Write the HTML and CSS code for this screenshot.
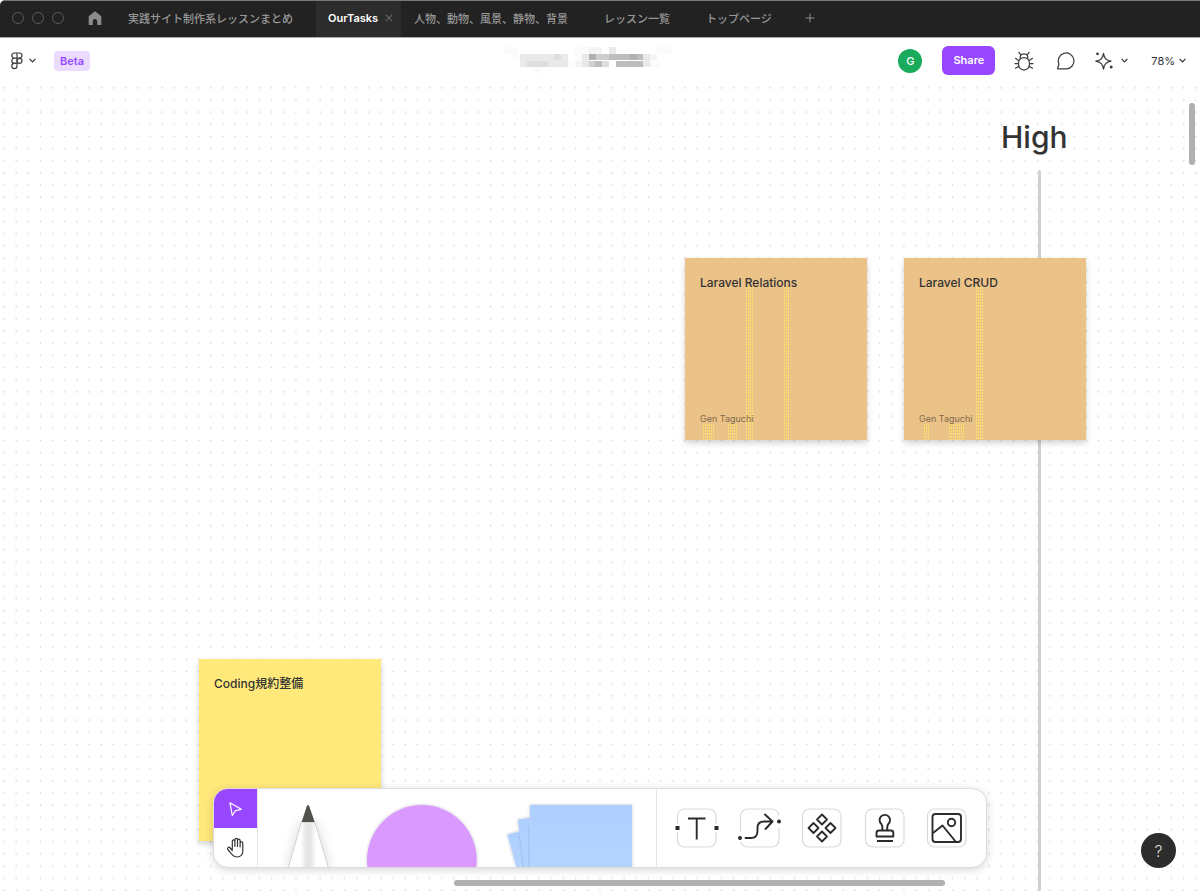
FILE: index.html
```
<!DOCTYPE html>
<html lang="ja">
<head>
<meta charset="utf-8">
<meta name="viewport" content="width=device-width, initial-scale=1">
<title>OurTasks</title>
<link rel="stylesheet" href="styles.css">
</head>
<body>
<div class="app">
  <nav class="tabs" aria-label="Files">
    <div class="lights"><span class="light"></span><span class="light"></span><span class="light"></span></div>
    <button class="home" aria-label="Home"><svg width="14" height="15" viewBox="0 0 14 15"><path d="M7 0.3 13.3 5.2V14H9.2V10.2A2.2 2.2 0 0 0 4.8 10.2V14H0.7V5.2Z" fill="#8c8c8c"/></svg></button>
    <a class="tab" href="#">実践サイト制作系レッスンまとめ</a>
    <div class="tab-active"><a class="tab-name" href="#" aria-current="page">OurTasks</a><button class="close" aria-label="Close tab"><svg width="8" height="8" viewBox="0 0 8 8"><path d="M.8.8 7.2 7.2M7.2.8.8 7.2" stroke="#666" stroke-width="1.200" fill="none"/></svg></button></div>
    <a class="tab" href="#">人物、動物、風景、静物、背景</a>
    <a class="tab" href="#">レッスン一覧</a>
    <a class="tab" href="#">トップページ</a>
    <button class="add" aria-label="New tab"><svg width="10" height="10" viewBox="0 0 10 10"><path d="M5 .5v9M.5 5h9" stroke="#8c8c8c" fill="none"/></svg></button>
  </nav>

  <header class="header">
    <div class="side">
      <button class="menu" aria-label="Main menu">
        <svg width="12" height="18" viewBox="0 0 12 18" fill="none" stroke="#3d3d3d" stroke-width="1.2"><path d="M6 1H3.4a2.6 2.6 0 0 0 0 5.2H6ZM6 1h2.4a2.6 2.6 0 0 1 0 5.2H6ZM6 6.2H3.4a2.6 2.6 0 0 0 0 5.2H6Z"/><circle cx="8.5" cy="8.8" r="2.5"/><path d="M6 11.4H3.4A2.6 2.6 0 1 0 6 14Z"/></svg>
        <svg width="7" height="5" viewBox="0 0 7 5" fill="none" stroke="#333" stroke-width="1.200"><path d="M.6.9 3.5 3.8 6.4.9"/></svg>
      </button>
      <span class="beta">Beta</span>
    </div>
    <svg class="mosaic" width="180" height="44" viewBox="0 0 180 44" shape-rendering="crispEdges" aria-hidden="true">
      <path fill="#fafcfb" d="M5 8h13.500v6.700H5zM76 8h27v6.700H76zM157 8h16v6.700h-16zM12 14.700h9v6.700h-9zM34 28.300h7v6.700h-7zM68 21.600h7v6.700h-7zM76 14.700h7v6.700h-7zM151 21.600h10v6.700h-10z"/>
      <path fill="#f4f4f4" d="M76 21.600h7v6.700h-7zM90 8h13v6.700H90zM151 14.700h7v6.700h-7z"/>
      <path fill="#e9e9e9" d="M20.700 14.700H69v13.600H20.700zM110 8h7v6.700h-7zM82.500 14.700h7v13.600h-7zM144 14.700h7v13.600h-7z"/>
      <path fill="#dedede" d="M28 21.600h20.500v6.700H28zM55 14.700h7v6.700h-7zM103 21.600h7v6.700h-7z"/>
      <path fill="#cecece" d="M96 14.700h14v6.700H96zM89.500 21.600h7v6.700h-7z"/>
      <path fill="#bdbdbd" d="M89.500 14.700h7v6.700h-7zM96 21.600h7v6.700h-7zM110 14.700h34v6.700h-34zM117 21.600h27v6.700h-27z"/>
      <path fill="#b0b0b0" d="M89.500 14.700h7v6.700h-7zM130.500 14.700h7v6.700h-7z"/>
    </svg>
    <div class="side side-right">
      <span class="avatar">G</span>
      <button class="share">Share</button>
      <button class="tool" aria-label="Report a bug"><svg width="20" height="20" viewBox="0 0 20 20" fill="none" stroke="#3d3d3d" stroke-width="1.250" stroke-linecap="round"><rect x="4.500" y="6.500" width="11" height="12.500" rx="5.500"/><path d="M6.300 7.500V6a3.700 3.200 0 0 1 7.400 0v1.500M6.500 3.300 5 1.300M13.500 3.300 15 1.300M4.500 9.300 1.500 7.300M15.500 9.300l3-2M4.500 12.500H1M15.500 12.500H19M4.800 15.200l-3.300 2M15.200 15.200l3.300 2"/></svg></button>
      <button class="tool" aria-label="Comments"><svg width="20" height="20" viewBox="0 0 20 20" fill="none" stroke="#3d3d3d" stroke-width="1.250" stroke-linejoin="round"><path d="M1.500 17.800 2.900 13.200A7.900 7.900 0 1 1 10.200 17.800Z"/></svg></button>
      <button class="tool sparkle" aria-label="Widgets"><svg width="20" height="20" viewBox="0 0 20 20" fill="none" stroke="#3d3d3d" stroke-width="1.250" stroke-linejoin="round"><path d="M9.500 2.300C10.300 7.500 12 9.200 17 10.200 12 11.200 10.300 13 9.500 18.100 8.700 13 7 11.200 1.800 10.200 7 9.200 8.700 7.500 9.500 2.300Z"/><circle cx="3.500" cy="2.800" r="1.400" fill="#3d3d3d" stroke="none"/><circle cx="17.200" cy="16" r="1.500" fill="#3d3d3d" stroke="none"/></svg>
        <svg width="7" height="5" viewBox="0 0 7 5" fill="none" stroke="#333" stroke-width="1.200"><path d="M.6.9 3.500 3.800 6.400.9"/></svg></button>
      <button class="zoom">78%<svg width="7" height="5" viewBox="0 0 7 5" fill="none" stroke="#333" stroke-width="1.200"><path d="M.6.9 3.500 3.800 6.400.9"/></svg></button>
    </div>
  </header>

  <main class="canvas">
    <svg class="grid" width="100%" height="100%" aria-hidden="true"><defs><pattern id="dots" width="16" height="16" patternUnits="userSpaceOnUse" patternTransform="translate(-2 -3.300) scale(.76)"><rect x="6.900" y="6.900" width="2.200" height="2.200" rx=".6" fill="#dadada"/></pattern></defs><rect width="100%" height="100%" fill="url(#dots)"/></svg>
    <div class="axis"></div>
    <h1 class="axis-label">High</h1>

    <article class="note orange relations">
      <i class="grain relations-a"></i><i class="grain relations-b"></i><i class="grain relations-c"></i><i class="grain relations-d"></i>
      <h2 class="note-title">Laravel Relations</h2><p class="author">Gen Taguchi</p>
    </article>
    <article class="note orange crud">
      <i class="grain crud-a"></i><i class="grain crud-b"></i><i class="grain crud-c"></i>
      <h2 class="note-title">Laravel CRUD</h2><p class="author">Gen Taguchi</p>
    </article>
    <article class="note yellow coding"><h2 class="note-title">Coding規約整備</h2></article>

    <div class="vbar"></div>
    <div class="hbar"></div>

    <div class="toolbar" role="toolbar" aria-label="Tools">
      <div class="modes">
        <button class="mode mode-on" aria-label="Select"><svg width="15" height="16" viewBox="0 0 15 16" fill="none" stroke="#fff" stroke-width="1.200" stroke-linejoin="round"><path d="M2 1.800 13.200 8.300 7.500 9.700 4.300 14.500Z"/></svg></button>
        <button class="mode" aria-label="Hand"><svg width="20" height="22" viewBox="0 0 20 22" fill="none" stroke="#333" stroke-width="1.200" stroke-linecap="round" stroke-linejoin="round"><path d="M6.300 12.300V4.200a1.300 1.300 0 0 1 2.600 0V9.500M8.900 9.500V2.600a1.300 1.300 0 0 1 2.600 0V9.500M11.500 9.500V3.500a1.300 1.300 0 0 1 2.600 0V10M14.100 10V6.300a1.350 1.350 0 0 1 2.700 0V14c0 3.700-2.400 6-5.700 6-3 0-4.500-1.300-6-3.700L1.800 12.500C.8 10.700 2.900 9.400 4.200 11l2.100 2.500"/></svg></button>
      </div>
      <div class="shapes">
        <svg class="art" viewBox="0 0 399 78" role="img" aria-label="Marker, shapes and sticky notes">
          <defs>
            <linearGradient id="barrel"><stop offset="0" stop-color="#fff"/><stop offset=".3" stop-color="#fff"/><stop offset=".45" stop-color="#e6e6e6"/><stop offset=".55" stop-color="#e6e6e6"/><stop offset=".7" stop-color="#fff"/></linearGradient>
            <linearGradient id="paper" x2="0" y2="1"><stop offset="0" stop-color="#aecfff"/><stop offset="1" stop-color="#b5d3ff"/></linearGradient>
            <filter id="soft" x="-60%" y="-30%" width="220%" height="160%"><feDropShadow dx="0" dy="1" stdDeviation="6" flood-opacity=".16"/></filter>
            <filter id="edge" x="-20%" y="-20%" width="140%" height="140%"><feDropShadow dx="0" dy="0" stdDeviation="1.500" flood-opacity=".25"/></filter>
          </defs>
          <path d="M43.500 33 30 80H71L57 33Z" fill="url(#barrel)" stroke="#c4c4c4" stroke-width=".8" filter="url(#soft)"/>
          <path d="M43.800 33 48.800 17.500Q50.200 14.500 51.500 17.500L56.800 33Z" fill="#50504c"/>
          <circle cx="164.300" cy="71" r="55" fill="#d999ff" filter="url(#edge)"/>
          <g fill="url(#paper)" filter="url(#edge)"><path d="M250 45.500 275 39V82H260Z"/><path d="M260.500 30.500 285 27V82H267Z"/><path d="M272.500 16H375V82H272.500Z"/></g>
          <path d="M261.500 44 266 78M271.500 37V78" stroke="#a5c5f5" stroke-width="1.500" fill="none"/>
        </svg>
      </div>
      <div class="inserts">
        <button class="insert" aria-label="Text"><svg width="46" height="40" viewBox="0 0 46 40" fill="none" stroke="#2b2b2b" stroke-width="1.900"><rect x="3.500" y="1" width="38.500" height="38" rx="7" stroke="#d9d9d9" stroke-width="1.200"/><path d="M14 10.500h17.500M22.700 10.500V31.500" /><path d="M0 16h7v8H0ZM39 16h7v8h-7Z" fill="#fff" stroke="none"/><path d="M1.500 18h4v4h-4ZM40.500 18h4v4h-4Z" fill="#2b2b2b" stroke="none"/></svg></button>
        <button class="insert" aria-label="Connector"><svg width="46" height="40" viewBox="0 0 46 40" fill="none" stroke="#2b2b2b" stroke-width="1.900" stroke-linecap="round" stroke-linejoin="round"><rect x="3.500" y="1" width="38.500" height="38" rx="7" stroke="#d9d9d9" stroke-width="1.200"/><path d="M0 24h7v10H0ZM38 8h7v12h-7Z" fill="#fff" stroke="none"/><path d="M8.500 30H14Q20.500 30 20.500 23V20Q20.500 13.500 27 13.500H34.500M28 6.500 35.500 13.500 28.500 21"/><circle cx="3" cy="30" r="2" fill="#2b2b2b" stroke="none"/><circle cx="42" cy="13.500" r="2" fill="#2b2b2b" stroke="none"/></svg></button>
        <button class="insert" aria-label="Components"><svg width="46" height="40" viewBox="0 0 46 40" fill="none" stroke="#2b2b2b" stroke-width="1.800" stroke-linejoin="round"><rect x="3.500" y="1" width="38.500" height="38" rx="7" stroke="#d9d9d9" stroke-width="1.200"/><path d="M23 6.500 28 11.500 23 16.500 18 11.500ZM23 23.500 28 28.500 23 33.500 18 28.500ZM14.500 15 19.500 20 14.500 25 9.500 20ZM31.500 15 36.500 20 31.500 25 26.500 20Z"/></svg></button>
        <button class="insert" aria-label="Stamp"><svg width="46" height="40" viewBox="0 0 46 40" fill="none" stroke="#2b2b2b" stroke-width="1.900" stroke-linejoin="round"><rect x="3.500" y="1" width="38.500" height="38" rx="7" stroke="#d9d9d9" stroke-width="1.200"/><path d="M20 22.500Q21.200 18.500 19.200 15.800A5.200 5.200 0 1 1 26.400 15.800Q24.500 18.500 25.500 22.500M14.500 28.500V25Q14.500 22.500 17 22.500H29Q31.300 22.500 31.300 25V28.500ZM15 33H31"/></svg></button>
        <button class="insert" aria-label="Image"><svg width="46" height="40" viewBox="0 0 46 40" fill="none" stroke="#2b2b2b" stroke-width="1.900" stroke-linejoin="round"><rect x="3.500" y="1" width="38.500" height="38" rx="7" stroke="#d9d9d9" stroke-width="1.200"/><rect x="8.500" y="6" width="28.500" height="28" rx="3"/><circle cx="27.500" cy="14.500" r="3.700"/><path d="M9 25 18.500 17.500 32 34"/></svg></button>
      </div>
    </div>
    <button class="help">?</button>
  </main>
</div>
</body>
</html>
```
FILE: styles.css
```
* { box-sizing: border-box; }
body { margin: 0; background: #fff; font-family: Inter, "Noto Sans CJK JP", sans-serif; color: #333; }
button { border: 0; padding: 0; background: none; font: inherit; color: inherit; cursor: pointer; }
a { color: inherit; text-decoration: none; }
h1, h2, p { margin: 0; }
svg { display: block; flex: none; }

.app { display: flex; flex-direction: column; min-height: 100vh; overflow: hidden; }

.tabs { display: flex; align-items: center; height: 38px; padding-bottom: 2px; background: #222; border-top: 1px solid #777; border-bottom: 1px solid #aaa; border-top-left-radius: 5px; color: #979797; font-size: 11px; font-weight: 500; white-space: nowrap; }
.lights { display: flex; gap: 8px; padding-left: 12px; }
.light { width: 12px; height: 12px; border: 1px solid #5c5c5c; border-radius: 50%; }
.home { padding: 0 13px 0 24px; }
.tab { padding: 0 23px 0 13px; }
.tab-active { display: flex; align-items: center; justify-content: space-between; height: 36px; margin-bottom: -2px; width: 85px; padding: 0 8px 2px 12px; background: #2c2c2c; color: #fff; font-weight: 600; }
.add { padding: 0 10px; }

.header { display: flex; align-items: center; justify-content: space-between; height: 47px; padding-bottom: 2px; background: #fff; font-size: 11px; }
.side { display: flex; align-items: center; flex: 1; padding-left: 11px; }
.menu { display: flex; align-items: center; gap: 6px; }
.beta { margin-left: 18px; padding: 0 6px; border-radius: 4px; background: #ebdcff; color: #9747ff; font-weight: 600; line-height: 20px; }
.mosaic { margin-right: 20px; }
.side-right { justify-content: flex-end; padding: 0 14px 0 0; }
.avatar { width: 24px; border-radius: 50%; background: #1bab5c; color: #fff; font-weight: 500; line-height: 24px; text-align: center; }
.share { margin: 0 19px 0 20px; padding: 0 11px; border-radius: 6px; background: #9747ff; color: #fff; font-weight: 600; line-height: 29px; }
.tool { margin-right: 22px; }
.sparkle { display: flex; align-items: center; gap: 7px; margin-left: -4px; margin-right: 23px; }
.zoom { display: flex; align-items: center; gap: 4px; }

.canvas { position: relative; flex: 1; min-height: 560px; overflow: hidden; }
.grid { position: absolute; inset: 0; }
.axis { position: absolute; left: 1038px; top: 85px; bottom: 0; width: 3px; border-radius: 2px; background: #d0d0d0; }
.axis-label { position: absolute; left: 1001px; top: 32px; font-size: 30px; font-weight: 500; line-height: 40px; }

.note { position: absolute; display: flex; flex-direction: column; justify-content: space-between; width: 182px; height: 182px; padding: 16px 15px; box-shadow: 0 3px 6px rgba(0, 0, 0, .18); }
.orange { background: #ebc288; }
.yellow { background: #ffe97a; }
.relations { left: 685px; top: 173px; }
.crud { left: 904px; top: 173px; }
.coding { left: 199px; top: 574px; }
.note-title { position: relative; font-size: 12px; font-weight: 500; line-height: 18px; }
.author { position: relative; color: #7f6a4b; font-size: 9px; line-height: 10px; }
.grain { position: absolute; bottom: 0; background: linear-gradient(90deg, #f8e36c 1px, transparent 1px) 0 0 / 2px 2px; -webkit-mask: linear-gradient(#000 2px, transparent 2px) 0 0 / 3px 3px; mask: linear-gradient(#000 2px, transparent 2px) 0 0 / 3px 3px; }
.relations-a { left: 61px; width: 8px; height: 153px; }
.relations-b { left: 99px; width: 5px; height: 153px; }
.relations-c { left: 18px; width: 12px; height: 16px; }
.relations-d { left: 43px; width: 9px; height: 16px; }
.crud-a { left: 72px; width: 8px; height: 153px; }
.crud-b { left: 20px; width: 5px; height: 16px; }
.crud-c { left: 45px; width: 15px; height: 16px; }

.vbar { position: absolute; right: 5px; top: 18px; width: 6px; height: 62px; border-radius: 3px; background: #b0b0b0; }
.hbar { position: absolute; left: 50%; bottom: 5px; width: 491px; height: 6px; margin-left: -146px; border-radius: 3px; background: #b0b0b0; }

.toolbar { position: absolute; left: 50%; bottom: 23px; display: flex; width: 774px; height: 80px; margin-left: -387px; border: 1px solid #dcdcdc; border-radius: 15px; background: #fff; box-shadow: 0 2px 8px rgba(0, 0, 0, .16); overflow: hidden; }
.modes { display: grid; grid-template-rows: 1fr 1fr; width: 44px; border-right: 1px solid #e4e4e4; }
.mode { display: grid; place-items: center; }
.mode-on { background: #9747ff; }
.shapes { flex: 1; border-right: 1px solid #e4e4e4; }
.art { width: 100%; height: 78px; }
.inserts { display: flex; align-items: center; justify-content: space-between; width: 329px; padding: 0 16px 0 17px; }
.help { position: absolute; right: 24px; bottom: 23px; width: 35px; height: 35px; border-radius: 50%; background: #2c2c2c; color: #ddd; font-size: 16px; font-weight: 300; }
```
